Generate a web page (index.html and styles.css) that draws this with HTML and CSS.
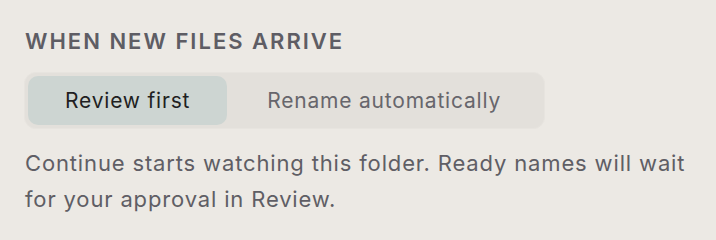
FILE: index.html
```html
<!DOCTYPE html>
<html lang="en">
<head>
    <meta charset="UTF-8">
    <meta name="viewport" content="width=device-width, initial-scale=1.0">
    <title>Import mode</title>
    <link rel="stylesheet" href="styles.css">
</head>
<body>
    <section class="mode-section">
        <h2 class="section-title">When new files arrive</h2>
        <div class="segmented" role="radiogroup">
            <button class="segment active" role="radio" aria-checked="true">Review first</button>
            <button class="segment" role="radio" aria-checked="false">Rename automatically</button>
        </div>
        <p class="mode-hint">Continue starts watching this folder. Ready names will wait for your approval in Review.</p>
    </section>
</body>
</html>
```

FILE: styles.css
```css
body {
    font-family: Inter, "Noto Sans", sans-serif;
    background-color: #ece9e4;
    margin: 0;
    padding: 0;
}
.mode-section {
    padding: 30px 14px 0 25px;
}
.section-title {
    margin: 0;
    font-size: 22px;
    line-height: 22px;
    font-weight: 600;
    letter-spacing: 2px;
    text-transform: uppercase;
    color: #5e5d64;
}
.segmented {
    display: inline-flex;
    margin-top: 20px;
    margin-left: -1px;
    padding: 3px;
    background-color: #e3e0db;
    border: 1px solid #e7e4df;
    border-radius: 12px;
}
.segment {
    font-family: inherit;
    font-size: 21px;
    line-height: 25px;
    letter-spacing: 0.8px;
    padding: 12px 37px;
    border: none;
    border-radius: 10px;
    background: transparent;
    color: #67666c;
    cursor: pointer;
}
.segment + .segment {
    padding: 12px 40px;
}
.segment.active {
    background-color: #cdd5d2;
    color: #1f1f22;
}
.mode-hint {
    margin: 16px 0 0;
    font-size: 22px;
    line-height: 36px;
    letter-spacing: 0.85px;
    color: #5f5e65;
}
```
